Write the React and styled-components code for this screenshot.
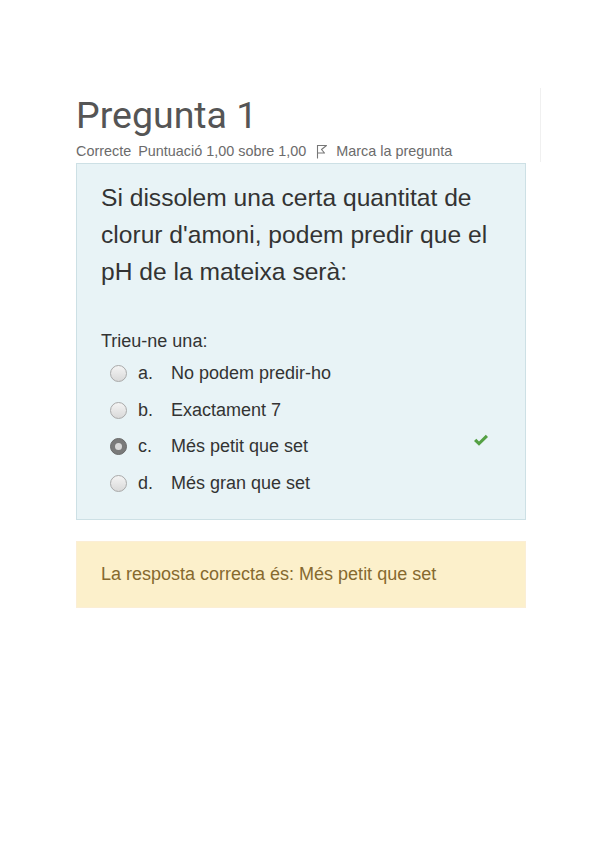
import React from "react";
import styled, { createGlobalStyle } from "styled-components";

const Global = createGlobalStyle`
  html, body { margin: 0; padding: 0; background: #fff; }
  body { width: 599px; height: 848px; overflow: hidden; }
`;

const Page = styled.div`
  display: flex;
  align-items: flex-start;
  padding: 91px 0 0 76px;
  font-family: "Liberation Sans", Arial, sans-serif;
`;

const Main = styled.div`
  width: 450px;
  display: flex;
  flex-direction: column;
`;

const Divider = styled.div`
  width: 1px;
  height: 74px;
  margin-top: -3px;
  margin-left: 14px;
  background: #f0f0f0;
`;

const Title = styled.h2`
  margin: 0;
  font-family: Roboto, "Liberation Sans", sans-serif;
  font-weight: 400;
  font-size: 37.5px;
  line-height: 48px;
  color: #555;
`;

const Info = styled.div`
  display: flex;
  align-items: center;
  font-size: 14.4px;
  line-height: 20px;
  color: #6b6b6b;
  margin-top: 2px;
  height: 20px;
`;

const InfoItem = styled.span`
  margin-right: ${(p) => p.gap || 6}px;
`;

const Flag = styled.svg`
  width: 12px;
  height: 15px;
  margin-right: 8px;
  margin-left: 4px;
`;

const QuestionBox = styled.div`
  margin-top: 2px;
  background: #e8f3f6;
  border: 1px solid #cde0e5;
  padding: 15px 24px 19px 24px;
  height: 357px;
  box-sizing: border-box;
  display: flex;
  flex-direction: column;
`;

const QText = styled.div`
  font-size: 24.6px;
  line-height: 37px;
  color: #333;
`;

const Prompt = styled.div`
  margin-top: 38px;
  font-size: 18px;
  line-height: 27px;
  color: #333;
`;

const Options = styled.div`
  display: flex;
  flex-direction: column;
`;

const Option = styled.label`
  display: flex;
  align-items: center;
  height: 36.7px;
  font-size: 18px;
  color: #333;
`;

const Radio = styled.span`
  width: 17px;
  height: 17px;
  box-sizing: border-box;
  border-radius: 50%;
  margin-left: 9px;
  margin-right: 11px;
  position: relative;
  ${(p) =>
    p.checked
      ? `
    background: #7a7a7a;
    border: 1px solid #6a6a6a;
    &::after {
      content: "";
      position: absolute;
      left: 4px; top: 4px;
      width: 7px; height: 7px;
      border-radius: 50%;
      background: #d8d8d8;
    }
  `
      : `
    background: linear-gradient(#f4f4f4, #d9d9d9);
    border: 1px solid #a9a9a9;
  `}
`;

const Letter = styled.span`
  width: 33px;
`;

const Answer = styled.span`
  flex: 1;
`;

const Check = styled.svg`
  width: 16px;
  height: 13px;
  margin-right: 12px;
  margin-top: -12px;
`;

const Feedback = styled.div`
  margin-top: 21px;
  background: #fcf0cb;
  border: 1px solid #fbeed5;
  height: 67px;
  box-sizing: border-box;
  padding: 0 24px;
  display: flex;
  align-items: center;
  font-size: 18px;
  color: #86692f;
`;

const options = [
  { l: "a.", t: "No podem predir-ho" },
  { l: "b.", t: "Exactament 7" },
  { l: "c.", t: "Més petit que set", checked: true },
  { l: "d.", t: "Més gran que set" },
];

export default function App() {
  return (
    <>
      <Global />
      <Page>
        <Main>
          <Title>Pregunta 1</Title>
          <Info>
            <InfoItem gap={7}>Correcte</InfoItem>
            <InfoItem gap={6}>Puntuació 1,00 sobre 1,00</InfoItem>
            <Flag viewBox="0 0 12 15" fill="none" stroke="#777" strokeWidth="1.1">
              <path d="M1.5 1 V14.5" />
              <path d="M1.5 1.5 H10.5 L5.5 5.5 L8.5 9 H1.5" strokeLinejoin="round" />
            </Flag>
            <InfoItem>Marca la pregunta</InfoItem>
          </Info>
          <QuestionBox>
            <QText>
              Si dissolem una certa quantitat de clorur d'amoni, podem predir que el pH de
              la mateixa serà:
            </QText>
            <Prompt>Trieu-ne una:</Prompt>
            <Options>
              {options.map((o) => (
                <Option key={o.l}>
                  <Radio checked={o.checked} />
                  <Letter>{o.l}</Letter>
                  <Answer>{o.t}</Answer>
                  {o.checked && (
                    <Check viewBox="0 0 16 13">
                      <path
                        d="M1 7 L3.3 4.8 L6 7.4 L12.8 0.8 L15 3 L6 11.8 Z"
                        fill="#54a044"
                      />
                    </Check>
                  )}
                </Option>
              ))}
            </Options>
          </QuestionBox>
          <Feedback>La resposta correcta és: Més petit que set</Feedback>
        </Main>
        <Divider />
      </Page>
    </>
  );
}
